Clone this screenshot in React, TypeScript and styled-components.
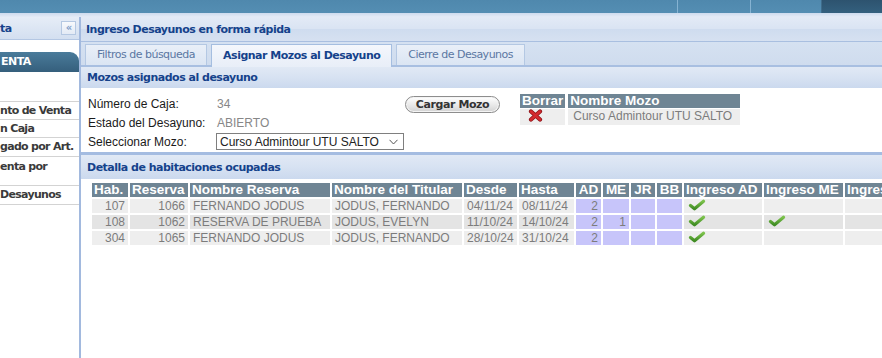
import React from 'react'
import styled, { createGlobalStyle, css } from 'styled-components'

const GlobalStyle = createGlobalStyle`
  html, body {
    margin: 0;
    padding: 0;
    background: #ffffff;
  }
  body {
    font-family: 'Liberation Sans', Arial, sans-serif;
    font-size: 12px;
  }
`

const tahoma = css`
  font-family: 'DejaVu Sans', Verdana, sans-serif;
  font-size: 11px;
  letter-spacing: -0.5px;
`

const Page = styled.div`
  width: 882px;
  height: 358px;
  overflow: hidden;
  display: flex;
  flex-direction: column;
  background: #fff;
`

const TopBar = styled.div`
  height: 13px;
  display: flex;
  flex-shrink: 0;
  background: linear-gradient(#4f88ad, #548eb3);
  overflow: hidden;
`

const Brand = styled.div`
  width: 680px;
  overflow: hidden;
  span {
    display: block;
    margin-top: -10px;
    padding-left: 4px;
    ${tahoma};
    font-weight: bold;
    letter-spacing: 2px;
    color: rgba(225, 238, 248, 0.32);
    white-space: nowrap;
  }
`

const TopCell = styled.div<{ $w: number; $dark?: boolean }>`
  width: ${(p) => p.$w}px;
  flex-shrink: 0;
  border-left: 1px solid ${(p) => (p.$dark ? '#3f6c8b' : '#86b3d2')};
  background: ${(p) => (p.$dark ? 'linear-gradient(#2d536f, #34607e)' : 'transparent')};
`

const SubBand = styled.div`
  height: 4px;
  flex-shrink: 0;
  background: linear-gradient(#cddbee, #e4ebf6);
`

const Body = styled.div`
  flex: 1;
  display: flex;
  min-height: 0;
`

const Sidebar = styled.div`
  width: 79px;
  flex-shrink: 0;
  border-right: 2px solid #a2b9de;
  overflow: hidden;
`

const SideHead = styled.div`
  height: 22px;
  border-bottom: 1px solid #b4c7e3;
  background: linear-gradient(#e6edf7, #d3dff0);
  display: flex;
  align-items: center;
  justify-content: space-between;
  padding-right: 3px;
  ${tahoma};
  font-weight: bold;
  color: #15428b;
`

const CollapseBtn = styled.div`
  width: 13px;
  height: 12px;
  border: 1px solid #b5c8e2;
  background: linear-gradient(#f7f9fc, #e3eaf5);
  color: #7d9cc8;
  font-size: 10px;
  line-height: 11px;
  text-align: center;
  letter-spacing: -1px;
`

const SideTab = styled.div`
  margin-top: 12px;
  height: 20px;
  border-radius: 0 9px 0 0;
  background: linear-gradient(#4a7b9a, #355f7c);
  color: #ffffff;
  ${tahoma};
  font-weight: bold;
  line-height: 20px;
  padding-left: 1px;
`

const SideItem = styled.div<{ $h: number }>`
  height: ${(p) => p.$h}px;
  border-bottom: 1px solid #d3d3d3;
  ${tahoma};
  font-weight: bold;
  letter-spacing: -0.7px;
  color: #3a3a3a;
  white-space: nowrap;
  line-height: ${(p) => (p.$h > 20 ? '14px' : `${p.$h}px`)};
  padding-top: ${(p) => (p.$h > 20 && p.$h < 27 ? '3px' : '0')};
  box-sizing: content-box;
`

const Main = styled.div`
  flex: 1;
  min-width: 0;
  overflow: hidden;
`

const TitleBar = styled.div`
  height: 24px;
  border-bottom: 1px solid #a9bfe0;
  background: linear-gradient(#e3eaf6 0%, #dae4f3 48%, #cfdcef 52%, #d6e1f1 100%);
  ${tahoma};
  font-weight: bold;
  color: #15428b;
  line-height: 26px;
  padding-left: 5px;
  white-space: nowrap;
`

const TabStrip = styled.div`
  height: 23px;
  padding-left: 4px;
  display: flex;
  align-items: flex-end;
  gap: 4px;
  background: linear-gradient(#d5e1f1, #cfdcee);
  border-bottom: 2px solid #a8bfe1;
`

const Tab = styled.div<{ $active?: boolean }>`
  height: 21px;
  box-sizing: border-box;
  padding: 0 11px;
  border: 1px solid #b4c8e3;
  border-bottom: none;
  ${tahoma};
  line-height: 20px;
  white-space: nowrap;
  color: #5b77a2;
  background: linear-gradient(#e9eff8, #dbe5f3);
  ${(p) =>
    p.$active &&
    css`
      height: 23px;
      margin-bottom: -2px;
      border-color: #a5bee0;
      color: #15428b;
      font-weight: bold;
      line-height: 22px;
      background: linear-gradient(#f4f7fc, #e8eef8);
    `}
`

const SectionHead = styled.div<{ $h: number; $thick?: boolean }>`
  height: ${(p) => p.$h}px;
  ${(p) => p.$thick && 'border-top: 3px solid #a4bce1;'}
  background: linear-gradient(#e1e9f5 0%, #d7e2f2 50%, #cbd9ee 100%);
  ${tahoma};
  font-weight: bold;
  color: #15428b;
  line-height: ${(p) => p.$h + 1}px;
  padding-left: 6px;
  white-space: nowrap;
`

const FormArea = styled.div`
  height: 64px;
  box-sizing: border-box;
  padding: 5px 0 0 7px;
  display: flex;
  align-items: flex-start;
`

const FormGrid = styled.div`
  margin-top: 2px;
  display: grid;
  grid-template-columns: 128px 189px 95px;
  grid-template-rows: 18px 20px 17px;
  align-items: center;
  color: #1a1a1a;
  white-space: nowrap;
`

const Value = styled.span`
  color: #878787;
  padding-left: 1px;
`

const SelectBox = styled.div`
  height: 17px;
  width: 188px;
  box-sizing: border-box;
  border: 1px solid #7f7f7f;
  display: flex;
  align-items: center;
  justify-content: space-between;
  padding: 0 5px 0 3px;
  color: #222;
`

const Button = styled.div`
  height: 17px;
  box-sizing: border-box;
  border: 1px solid #8d8d8d;
  border-radius: 9px;
  background: linear-gradient(#ffffff, #e6e6e6 60%, #d2d2d2);
  box-shadow: inset 0 0 0 1px #f4f4f4;
  ${tahoma};
  letter-spacing: -0.4px;
  font-weight: bold;
  color: #333;
  line-height: 15px;
  text-align: center;
`

const MozoTable = styled.table`
  margin-left: 17px;
  border-collapse: separate;
  border-spacing: 3px 1px;
  white-space: nowrap;
`

const HeadCell = styled.th<{ $w?: number; $align?: string }>`
  background: #6f8594;
  color: #ffffff;
  font-family: 'Liberation Sans', Arial, sans-serif;
  font-size: 13.5px;
  font-weight: bold;
  padding: 0 2px;
  height: 14px;
  line-height: 14px;
  text-align: ${(p) => p.$align || 'left'};
  overflow: hidden;
  white-space: nowrap;
  ${(p) => p.$w !== undefined && `width: ${p.$w}px;`}
`

const Cell = styled.td<{ $align?: string; $tint?: boolean; $shade?: boolean }>`
  background: ${(p) => (p.$tint ? '#c7c5fa' : p.$shade ? '#e4e4e4' : '#eeeeee')};
  color: #7c7c7c;
  font-size: 12px;
  height: 14px;
  line-height: 14px;
  padding: 0 3px;
  text-align: ${(p) => p.$align || 'left'};
  vertical-align: top;
  overflow: hidden;
  white-space: nowrap;
`

const GridWrap = styled.div`
  padding: 2px 0 0 9px;
`

const DataTable = styled.table`
  border-collapse: separate;
  border-spacing: 2px;
  table-layout: fixed;
  width: 917px;
`

const IconCell = styled(Cell)`
  padding: 0 0 0 4px;
  svg {
    display: block;
  }
`

function RedCross() {
  return (
    <svg width="15" height="13" viewBox="0 0 15 13">
      <path d="M3 2.5 L12 10.5 M12 2.5 L3 10.5" stroke="#8e1419" strokeWidth="4.2" strokeLinecap="round" />
      <path d="M3 2.5 L12 10.5 M12 2.5 L3 10.5" stroke="#d42a2f" strokeWidth="2.6" strokeLinecap="round" />
    </svg>
  )
}

function Check() {
  return (
    <svg width="18" height="12" viewBox="0 0 18 12">
      <defs>
        <linearGradient id="chk" x1="0" y1="0" x2="0" y2="1">
          <stop offset="0" stopColor="#7cc24c" />
          <stop offset="1" stopColor="#3f8c23" />
        </linearGradient>
      </defs>
      <path d="M2.5 6.5 L6.5 9.8 L15.5 2.2" fill="none" stroke="url(#chk)" strokeWidth="3.2" strokeLinecap="round" strokeLinejoin="round" />
    </svg>
  )
}

function Chevron() {
  return (
    <svg width="9" height="6" viewBox="0 0 9 6">
      <path d="M0.5 0.8 L4.5 5 L8.5 0.8" fill="none" stroke="#555" strokeWidth="1" />
    </svg>
  )
}

type Room = {
  hab: string
  reserva: string
  nombre: string
  titular: string
  desde: string
  hasta: string
  ad: string
  me: string
  ingresoAD: boolean
  ingresoME: boolean
}

const rooms: Room[] = [
  { hab: '107', reserva: '1066', nombre: 'FERNANDO JODUS', titular: 'JODUS, FERNANDO', desde: '04/11/24', hasta: '08/11/24', ad: '2', me: '', ingresoAD: true, ingresoME: false },
  { hab: '108', reserva: '1062', nombre: 'RESERVA DE PRUEBA', titular: 'JODUS, EVELYN', desde: '11/10/24', hasta: '14/10/24', ad: '2', me: '1', ingresoAD: true, ingresoME: true },
  { hab: '304', reserva: '1065', nombre: 'FERNANDO JODUS', titular: 'JODUS, FERNANDO', desde: '28/10/24', hasta: '31/10/24', ad: '2', me: '', ingresoAD: true, ingresoME: false },
]

const sideItems = [
  { text: '', h: 26 },
  { text: 'nto de Venta', h: 17 },
  { text: 'n Caja', h: 17 },
  { text: 'gado por Art.', h: 18 },
  { text: 'enta por', h: 25 },
  { text: ' Desayunos', h: 18 },
]

const colWidths = [36, 58, 140, 130, 53, 55, 25, 26, 24, 25, 78, 79, 79, 79]

export default function App() {
  return (
    <Page>
      <GlobalStyle />
      <TopBar>
        <Brand>
          <span>HOTELES MANAGEMENT SOFTWARE</span>
        </Brand>
        <TopCell $w={72} />
        <TopCell $w={70} />
        <TopCell $w={60} $dark />
      </TopBar>
      <SubBand />
      <Body>
        <Sidebar>
          <SideHead>
            <span>ta</span>
            <CollapseBtn>«</CollapseBtn>
          </SideHead>
          <SideTab>ENTA</SideTab>
          {sideItems.map((item, i) => (
            <SideItem key={i} $h={item.h}>
              {item.text}
            </SideItem>
          ))}
        </Sidebar>
        <Main>
          <TitleBar>Ingreso Desayunos en forma rápida</TitleBar>
          <TabStrip>
            <Tab>Filtros de búsqueda</Tab>
            <Tab $active>Asignar Mozos al Desayuno</Tab>
            <Tab>Cierre de Desayunos</Tab>
          </TabStrip>
          <SectionHead $h={21}>Mozos asignados al desayuno</SectionHead>
          <FormArea>
            <FormGrid>
              <span>Número de Caja:</span>
              <Value>34</Value>
              <Button>Cargar Mozo</Button>
              <span>Estado del Desayuno:</span>
              <Value>ABIERTO</Value>
              <span />
              <span>Seleccionar Mozo:</span>
              <SelectBox>
                <span>Curso Admintour UTU SALTO</span>
                <Chevron />
              </SelectBox>
            </FormGrid>
            <MozoTable>
              <thead>
                <tr>
                  <HeadCell>Borrar</HeadCell>
                  <HeadCell $w={168}>Nombre Mozo</HeadCell>
                </tr>
              </thead>
              <tbody>
                <tr>
                  <IconCell style={{ height: 16, paddingLeft: 8 }}>
                    <RedCross />
                  </IconCell>
                  <Cell style={{ height: 16, paddingLeft: 5 }}>Curso Admintour UTU SALTO</Cell>
                </tr>
              </tbody>
            </MozoTable>
          </FormArea>
          <SectionHead $h={24} $thick>
            Detalla de habitaciones ocupadas
          </SectionHead>
          <GridWrap>
            <DataTable>
              <colgroup>
                {colWidths.map((w, i) => (
                  <col key={i} style={{ width: w }} />
                ))}
              </colgroup>
              <thead>
                <tr>
                  <HeadCell>Hab.</HeadCell>
                  <HeadCell>Reserva</HeadCell>
                  <HeadCell>Nombre Reserva</HeadCell>
                  <HeadCell>Nombre del Titular</HeadCell>
                  <HeadCell>Desde</HeadCell>
                  <HeadCell>Hasta</HeadCell>
                  <HeadCell $align="center">AD</HeadCell>
                  <HeadCell $align="center">ME</HeadCell>
                  <HeadCell $align="center">JR</HeadCell>
                  <HeadCell $align="center">BB</HeadCell>
                  <HeadCell>Ingreso AD</HeadCell>
                  <HeadCell>Ingreso ME</HeadCell>
                  <HeadCell>Ingreso JR</HeadCell>
                  <HeadCell>Ingreso BB</HeadCell>
                </tr>
              </thead>
              <tbody>
                {rooms.map((r, i) => {
                  const shade = i === 1
                  return (
                    <tr key={r.hab}>
                      <Cell $shade={shade} $align="right">{r.hab}</Cell>
                      <Cell $shade={shade} $align="right">{r.reserva}</Cell>
                      <Cell $shade={shade}>{r.nombre}</Cell>
                      <Cell $shade={shade}>{r.titular}</Cell>
                      <Cell $shade={shade}>{r.desde}</Cell>
                      <Cell $shade={shade}>{r.hasta}</Cell>
                      <Cell $tint $align="right">{r.ad}</Cell>
                      <Cell $tint $align="right">{r.me}</Cell>
                      <Cell $tint />
                      <Cell $tint />
                      <IconCell $shade={shade}>{r.ingresoAD && <Check />}</IconCell>
                      <IconCell $shade={shade}>{r.ingresoME && <Check />}</IconCell>
                      <IconCell $shade={shade} />
                      <IconCell $shade={shade} />
                    </tr>
                  )
                })}
              </tbody>
            </DataTable>
          </GridWrap>
        </Main>
      </Body>
    </Page>
  )
}
